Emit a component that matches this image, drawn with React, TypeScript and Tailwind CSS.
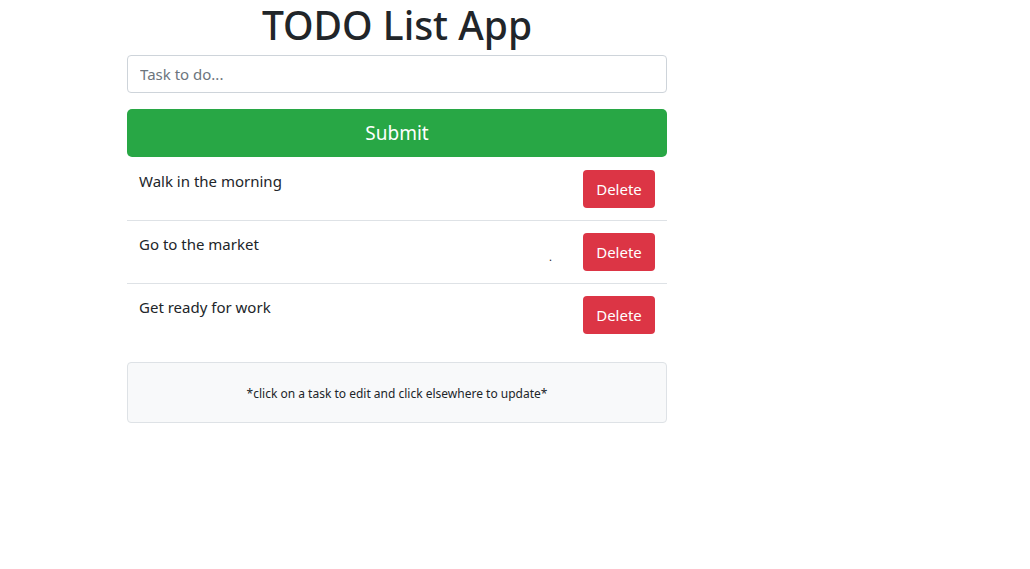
const tasks = ['Walk in the morning', 'Go to the market', 'Get ready for work']

export default function App() {
  return (
    <div className="min-h-screen bg-white text-[#212529] font-['Segoe_UI','Noto_Sans',sans-serif]">
      <div className="w-[540px] ml-[127px] flex flex-col">
        <h1 className="text-center text-[39px] font-medium leading-[46px] pt-[2px] mb-[7px]">TODO List App</h1>

        <input
          type="text"
          placeholder="Task to do..."
          className="h-[38px] w-full rounded border border-[#ced4da] px-3 text-[15px] text-[#495057] placeholder:text-[#6c757d] outline-none"
        />

        <button className="mt-4 h-12 w-full rounded-[5px] bg-[#28a745] text-[19px] text-white">Submit</button>

        <ul className="flex flex-col">
          {tasks.map((t, i) => (
            <li
              key={t}
              className={
                i === 0
                  ? 'relative flex items-start justify-between px-3 pt-[13px] pb-3'
                  : 'relative flex items-start justify-between px-3 pt-3 pb-3 border-t border-[#dee2e6]'
              }
            >
              <span className="text-[15px] leading-6 -mt-[1px]">{t}</span>
              {i === 1 && <span className="absolute left-[422px] top-[28px] text-[11px] leading-4">.</span>}
              <button className="h-[38px] w-[72px] rounded bg-[#dc3545] text-[15px] text-white">Delete</button>
            </li>
          ))}
        </ul>

        <div className="mt-4 h-[61px] pt-[3px] flex items-center justify-center rounded border border-[#dee2e6] bg-[#f8f9fa] text-[12px]">
          *click on a task to edit and click elsewhere to update*
        </div>
      </div>
    </div>
  )
}
